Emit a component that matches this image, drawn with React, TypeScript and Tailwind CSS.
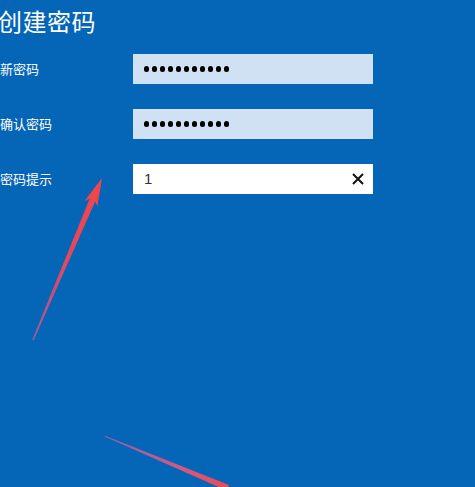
const fields = [
  { label: '新密码', value: '●●●●●●●●●●●', kind: 'dots' },
  { label: '确认密码', value: '●●●●●●●●●●●', kind: 'dots' },
  { label: '密码提示', value: '1', kind: 'text' },
]

function Arrows() {
  return (
    <svg className="absolute inset-0 pointer-events-none" width="475" height="487" viewBox="0 0 475 487">
      <defs>
        <linearGradient id="a1" x1="33" y1="340" x2="102" y2="178" gradientUnits="userSpaceOnUse">
          <stop offset="0" stopColor="#a25a9c" />
          <stop offset="0.5" stopColor="#e4485a" />
          <stop offset="1" stopColor="#f2454a" />
        </linearGradient>
        <linearGradient id="a2" x1="105" y1="436" x2="225" y2="490" gradientUnits="userSpaceOnUse">
          <stop offset="0" stopColor="#8c63a8" />
          <stop offset="0.6" stopColor="#d05a86" />
          <stop offset="1" stopColor="#ec4b58" />
        </linearGradient>
      </defs>
      <polygon
        fill="url(#a1)"
        points="32.3,339.7 89.7,198.8 84.5,200.9 102,178 97.3,206.5 95.3,201.2 33.7,340.3"
      />
      <polygon fill="url(#a2)" points="104.6,435.6 229,485 226.5,490.5 105.2,436.8" />
    </svg>
  )
}

export default function App() {
  return (
    <div className="relative w-[475px] h-[487px] overflow-hidden bg-[#0565b6] font-['Noto_Sans_CJK_SC',sans-serif] text-white">
      <h1 className="pt-[5px] text-[24px] leading-[32px] font-normal tracking-[0.5px] -ml-[2px]">创建密码</h1>
      <div className="mt-[17px] flex flex-col gap-[25px]">
        {fields.map((f) => (
          <div key={f.label} className="flex items-center">
            <div className="w-[133px] shrink-0 text-[13px] leading-[18px]">{f.label}</div>
            <div
              className={`flex h-[30px] w-[240px] items-center pl-[11px] pr-[9px] ${
                f.kind === 'dots' ? 'bg-[#cfe1f2]' : 'bg-white'
              }`}
            >
              {f.kind === 'dots' ? (
                <span className="flex gap-[2.8px]">
                  {Array.from({ length: 11 }).map((_, i) => (
                    <span key={i} className="block h-[5.2px] w-[5.2px] rounded-full bg-black" />
                  ))}
                </span>
              ) : (
                <>
                  <span className="flex-1 text-[15px] text-[#333] font-['Liberation_Sans',sans-serif]">{f.value}</span>
                  <svg width="12" height="12" viewBox="0 0 12 12">
                    <path d="M1 1L11 11M11 1L1 11" stroke="#111" strokeWidth="2" />
                  </svg>
                </>
              )}
            </div>
          </div>
        ))}
      </div>
      <Arrows />
    </div>
  )
}
